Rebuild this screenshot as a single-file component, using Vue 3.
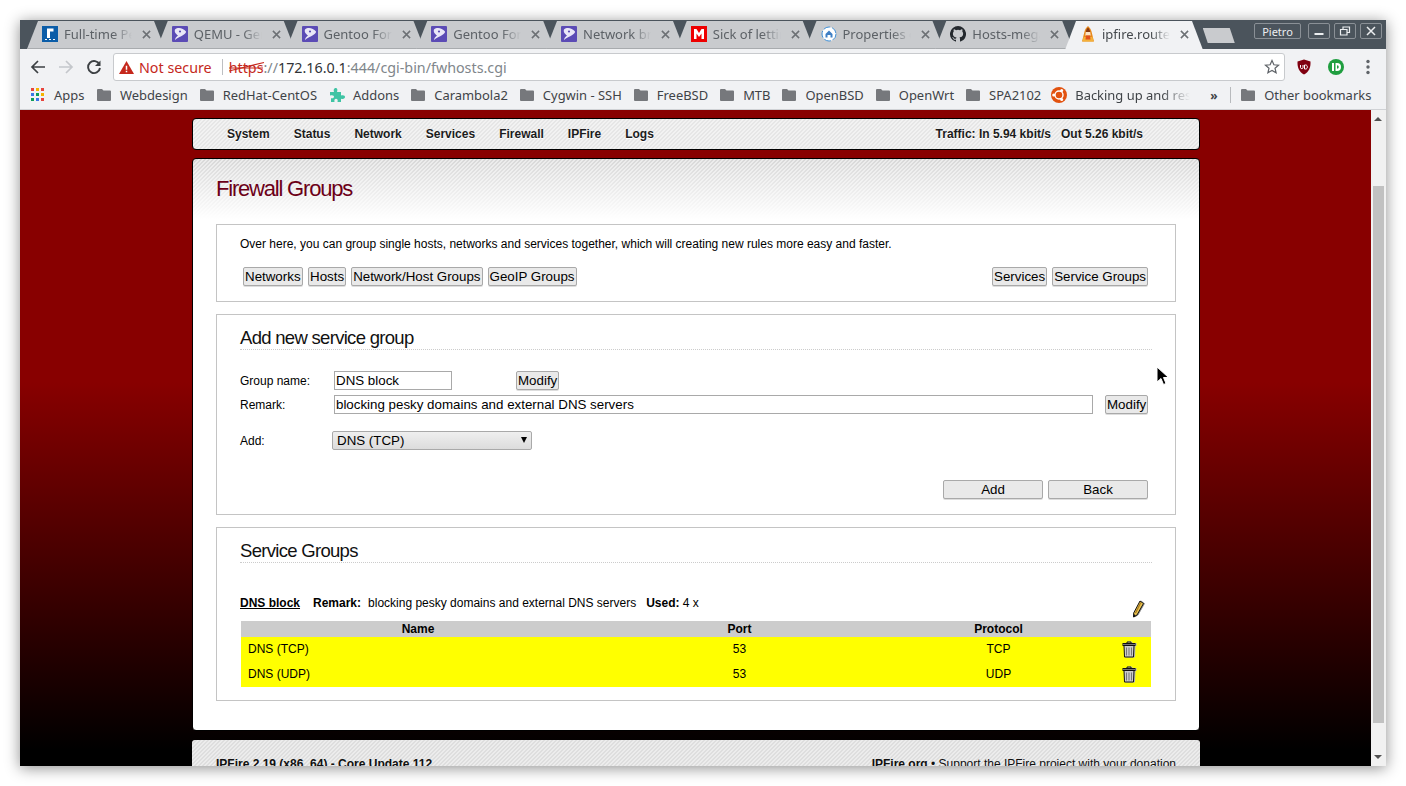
<script setup>
const tabs = [
  { title: 'Full-time Pentester', icon: 'rack' },
  { title: 'QEMU - Gentoo', icon: 'gentoo' },
  { title: 'Gentoo Forums', icon: 'gentoo' },
  { title: 'Gentoo Forums', icon: 'gentoo' },
  { title: 'Network bridge', icon: 'gentoo' },
  { title: 'Sick of letting', icon: 'mega' },
  { title: 'Properties of', icon: 'ring' },
  { title: 'Hosts-mega', icon: 'github' },
  { title: 'ipfire.router', icon: 'flame', active: true }
];

const bookmarks = [
  { label: 'Webdesign', icon: 'folder' },
  { label: 'RedHat-CentOS', icon: 'folder' },
  { label: 'Addons', icon: 'puzzle' },
  { label: 'Carambola2', icon: 'folder' },
  { label: 'Cygwin - SSH', icon: 'folder' },
  { label: 'FreeBSD', icon: 'folder' },
  { label: 'MTB', icon: 'folder' },
  { label: 'OpenBSD', icon: 'folder' },
  { label: 'OpenWrt', icon: 'folder' },
  { label: 'SPA2102', icon: 'folder' }
];

const appColors = ['#e8453c', '#f4b400', '#e8453c', '#3b78e7', '#0f9d58', '#f4b400', '#0f9d58', '#3b78e7', '#e8453c'];
const navItems = ['System', 'Status', 'Network', 'Services', 'Firewall', 'IPFire', 'Logs'];
const rows = [
  { name: 'DNS (TCP)', port: 53, protocol: 'TCP' },
  { name: 'DNS (UDP)', port: 53, protocol: 'UDP' }
];
</script>

<template>
  <div class="desktop">
    <div class="window">
      <div class="tabstrip">
        <div v-for="tab in tabs" :key="tab.title + tab.icon" class="tab" :class="{ active: tab.active }">
          <svg class="favicon" viewBox="0 0 16 16">
            <template v-if="tab.icon === 'rack'">
              <rect width="16" height="16" fill="#0b5da8" />
              <path d="M5 2.500h6.500v3H8v6.500H5z" fill="#fff" />
              <path d="M3 13.500h2M7 13.500h2M11 13.500h2" stroke="#fff" stroke-width="1" />
            </template>
            <template v-else-if="tab.icon === 'gentoo'">
              <rect width="16" height="16" rx="1" fill="#5b4bb5" />
              <path d="M3 3.500C6 1 11 2 14 5.500c.6 1.500-3 4-6.500 5.500-2 1-3.500 2-4.500 3 0-2 1.500-3 3-4.500C4 8 2 6 3 3.500z" fill="#e9e6f7" />
              <circle cx="8" cy="5.500" r="1.100" fill="#5b4bb5" />
            </template>
            <template v-else-if="tab.icon === 'mega'">
              <rect width="16" height="16" fill="#ee0000" />
              <rect x="1.500" y="1.500" width="13" height="13" fill="#ee0000" />
              <path d="M3 13V3h2.500L8 7l2.500-4H13v10h-2.500V7.500L8 11 5.500 7.500V13z" fill="#fff" />
            </template>
            <template v-else-if="tab.icon === 'ring'">
              <circle cx="8" cy="8" r="7" fill="#fff" stroke="#3f8fd6" stroke-width="1" stroke-dasharray="7 2" />
              <path d="M8 4.500l3.500 3.500v3.500h-2V9h-3v2.500h-2V8z" fill="#3f7fc4" />
            </template>
            <template v-else-if="tab.icon === 'github'">
              <path d="M8 0a8 8 0 0 0-2.530 15.590c.4.070.55-.170.55-.380v-1.490c-2.230.490-2.700-.940-2.700-.940-.360-.930-.890-1.170-.890-1.170-.730-.500.060-.490.060-.490.800.060 1.230.830 1.230.830.710 1.220 1.870.870 2.330.660.070-.520.280-.870.510-1.070-1.780-.200-3.640-.890-3.640-3.950 0-.870.310-1.590.820-2.150-.080-.200-.360-1.020.080-2.120 0 0 .670-.210 2.200.820a7.600 7.600 0 0 1 4 0c1.530-1.040 2.200-.820 2.200-.820.440 1.100.160 1.920.080 2.120.510.560.820 1.270.820 2.150 0 3.070-1.870 3.750-3.650 3.950.290.250.540.730.540 1.480v2.200c0 .210.150.460.550.380A8 8 0 0 0 8 0z" fill="#24292e" />
            </template>
            <template v-else>
              <path d="M8 0c1.700 1.500 3 3.200 3.500 5.500L14 15.500H2L4.500 5.500C5 3.200 6.300 1.500 8 0z" fill="#e8891c" />
              <path d="M8 1.500c1.200 1.200 2 2.600 2.200 4.500H5.800C6 4.100 6.800 2.700 8 1.500z" fill="#8a3a12" />
              <path d="M5.800 6h4.400l.5 3.500H5.300z" fill="#fbe3c4" />
              <path d="M3.500 11h9l1 4.500h-11z" fill="#f4b13a" />
              <path d="M6 9.500h4l.5 4h-5z" fill="#e2501c" />
            </template>
          </svg>
          <span class="tab-title">{{ tab.title }}</span>
          <svg class="tab-close" viewBox="0 0 10 10"><path d="M1 1l8 8M9 1l-8 8" /></svg>
        </div>
        <div class="new-tab"></div>
        <div class="window-controls">
          <div class="profile">Pietro</div>
          <div class="win-btn">
            <svg viewBox="0 0 12 12"><path d="M1.500 9h9" stroke-width="2" /></svg>
          </div>
          <div class="win-btn">
            <svg viewBox="0 0 12 12"><path d="M1.500 4.500h6.500v5.500H1.500zM4 4.500V2h6.500v5.500H8" stroke-width="1.200" /></svg>
          </div>
          <div class="win-btn">
            <svg viewBox="0 0 12 12"><path d="M2 2l8 8M10 2l-8 8" stroke-width="1.500" /></svg>
          </div>
        </div>
      </div>

      <div class="toolbar">
        <svg class="tool" viewBox="0 0 16 16"><path d="M15 8H2M8 2L2 8l6 6" fill="none" stroke="#3c4043" stroke-width="1.700" /></svg>
        <svg class="tool" viewBox="0 0 16 16"><path d="M1 8h13M8 2l6 6-6 6" fill="none" stroke="#c4c7cb" stroke-width="1.700" /></svg>
        <svg class="tool" viewBox="0 0 16 16"><path d="M13.500 5.500A6 6 0 1 0 14 9" fill="none" stroke="#3c4043" stroke-width="1.900" /><path d="M14.500 1.500v5.500H9z" fill="#3c4043" /></svg>
        <div class="omnibox">
          <svg class="warn" viewBox="0 0 16 16"><path d="M8 1l8 14H0z" fill="#c5281c" /><path d="M7.200 6h1.600v4.500H7.200zM7.200 11.500h1.600V13H7.200z" fill="#fff" /></svg>
          <span class="not-secure">Not secure</span>
          <span class="omni-sep"></span>
          <span class="url">
            <span class="scheme">https<svg viewBox="0 0 36 12"><path d="M0 10L35 1.500" stroke="#c5281c" stroke-width="1.200" /><path d="M0 7h34" stroke="#c5281c" stroke-width="1" /></svg></span><span class="dim">://</span><span class="host">172.16.0.1</span><span class="dim">:444/cgi-bin/fwhosts.cgi</span>
          </span>
          <svg class="star" viewBox="0 0 16 16"><path d="M8 1.500l1.900 4.300 4.600.4-3.500 3 1.100 4.600L8 11.400l-4.100 2.400L5 9.200l-3.500-3 4.600-.4z" fill="none" stroke="#5f6368" stroke-width="1.200" /></svg>
        </div>
        <div class="extensions">
          <svg viewBox="0 0 16 16" class="ext"><path d="M8 0.500l6.500 2c.3 6-1.500 10.500-6.500 13-5-2.500-6.800-7-6.500-13z" fill="#800010" /><path d="M4.500 6v2.500c0 1.500 2.500 1.500 2.500 0V6M8.500 6v4h1.200c2.200 0 2.200-4 0-4z" fill="none" stroke="#fff" stroke-width="1" /></svg>
          <svg viewBox="0 0 16 16" class="ext"><circle cx="8" cy="8" r="8" fill="#1f9e3f" /><rect x="4" y="4" width="2" height="8" fill="#fff" /><path d="M7.500 4H9a4 4 0 0 1 0 8H7.500z" fill="#fff" /><path d="M9 6.200v3.600a1.800 1.800 0 0 0 0-3.600z" fill="#1f9e3f" /></svg>
          <svg viewBox="0 0 16 16" class="ext"><circle cx="8" cy="2.500" r="1.700" fill="#5f6368" /><circle cx="8" cy="8" r="1.700" fill="#5f6368" /><circle cx="8" cy="13.500" r="1.700" fill="#5f6368" /></svg>
        </div>
      </div>

      <div class="bookmarks">
        <div class="bm apps">
          <div class="apps-grid"><i v-for="(c, i) in appColors" :key="i" :style="{ background: c }"></i></div>
          <span>Apps</span>
        </div>
        <div v-for="b in bookmarks" :key="b.label" class="bm">
          <svg v-if="b.icon === 'folder'" class="bm-icon" viewBox="0 0 14 14"><path d="M0 2a1 1 0 0 1 1-1h4l1.500 1.500H13a1 1 0 0 1 1 1V12a1 1 0 0 1-1 1H1a1 1 0 0 1-1-1z" fill="#76787c" /></svg>
          <svg v-else class="bm-icon puzzle" viewBox="0 0 16 16"><path d="M1 5h4c-.8-3 .5-4 1.700-4S9 2 8 5h4v3.500c2.800-.8 4 .3 4 1.500s-1.200 2.500-4 1.700V15H8.500c.7-2.500-.3-3.300-1.500-3.300S5 12.500 5.500 15H2v-3.800c2 .5 3-.3 3-1.400S4 7.800 1 8.500z" fill="#3fc4a4" /></svg>
          <span>{{ b.label }}</span>
        </div>
        <div class="bm backing">
          <svg class="bm-icon" viewBox="0 0 16 16"><circle cx="8" cy="8" r="8" fill="#e2520f" /><circle cx="8" cy="8" r="4" fill="none" stroke="#fff" stroke-width="1.400" /><circle cx="2.700" cy="8" r="1.500" fill="#fff" /><circle cx="10.700" cy="3.400" r="1.500" fill="#fff" /><circle cx="10.700" cy="12.600" r="1.500" fill="#fff" /></svg>
          <span class="fade">Backing up and restoring</span>
        </div>
        <div class="more">»</div>
        <div class="bm-sep"></div>
        <div class="bm">
          <svg class="bm-icon" viewBox="0 0 14 14"><path d="M0 2a1 1 0 0 1 1-1h4l1.500 1.500H13a1 1 0 0 1 1 1V12a1 1 0 0 1-1 1H1a1 1 0 0 1-1-1z" fill="#76787c" /></svg>
          <span>Other bookmarks</span>
        </div>
      </div>

      <div class="viewport">
        <div class="page">
          <div class="navbar">
            <a v-for="item in navItems" :key="item">{{ item }}</a>
            <span class="traffic">Traffic: In 5.94 kbit/s &nbsp; Out 5.26 kbit/s</span>
          </div>

          <div class="main">
            <h1>Firewall Groups</h1>

            <section class="box intro">
              <p>Over here, you can group single hosts, networks and services together, which will creating new rules more easy and faster.</p>
              <div class="group-nav">
                <button>Networks</button>
                <button>Hosts</button>
                <button>Network/Host Groups</button>
                <button>GeoIP Groups</button>
                <span class="spacer"></span>
                <button>Services</button>
                <button>Service Groups</button>
              </div>
            </section>

            <section class="box add">
              <h2>Add new service group</h2>
              <div class="form-row first">
                <label>Group name:</label>
                <input class="name-input" value="DNS block" />
                <button class="mod-name">Modify</button>
              </div>
              <div class="form-row">
                <label>Remark:</label>
                <input class="remark-input" value="blocking pesky domains and external DNS servers" />
                <button class="mod-remark">Modify</button>
              </div>
              <div class="form-row add-row">
                <label>Add:</label>
                <div class="select">DNS (TCP)<span class="caret"></span></div>
              </div>
              <div class="form-actions">
                <button class="wide">Add</button>
                <button class="wide">Back</button>
              </div>
            </section>

            <section class="box groups">
              <h2>Service Groups</h2>
              <div class="summary">
                <span class="group-name">DNS block</span>
                <b>Remark:</b>
                <span>blocking pesky domains and external DNS servers</span>
                <span class="used"><b>Used:</b> 4 x</span>
                <svg class="pencil" viewBox="0 0 12 18">
                  <path d="M8 1l3.500 2.500L5 15l-3.500 2 .2-4z" fill="#e9c24f" stroke="#111" stroke-width="1" />
                  <path d="M8.800 2.500L3.500 13" stroke="#a87a1c" stroke-width="1.200" />
                  <path d="M1.500 17l.2-3 2 1.300z" fill="#111" />
                </svg>
              </div>
              <table>
                <thead>
                  <tr><th class="c-name">Name</th><th class="c-port">Port</th><th class="c-proto">Protocol</th><th class="c-act"></th></tr>
                </thead>
                <tbody>
                  <tr v-for="row in rows" :key="row.name">
                    <td class="left"><span>{{ row.name }}</span></td>
                    <td><span>{{ row.port }}</span></td>
                    <td><span>{{ row.protocol }}</span></td>
                    <td class="act-cell">
                      <svg class="trash" viewBox="0 0 14 17">
                        <path d="M5 2.500V1h4v1.500" fill="none" stroke="#111" stroke-width="1" />
                        <rect x="1" y="2.500" width="12" height="2" fill="#777" stroke="#111" stroke-width="1" />
                        <path d="M2 4.500h10l-.5 11.500h-9z" fill="#ccc" stroke="#111" stroke-width="1" />
                        <path d="M4.500 6.500v8M7 6.500v8M9.500 6.500v8" stroke="#777" stroke-width="1" />
                      </svg>
                    </td>
                  </tr>
                </tbody>
              </table>
            </section>
          </div>

          <div class="footer">
            <b>IPFire 2.19 (x86_64) - Core Update 112</b>
            <span><b>IPFire.org</b> • Support the IPFire project with your donation</span>
          </div>
        </div>

        <div class="scrollbar">
          <div class="sb-up"></div>
          <div class="sb-thumb"></div>
          <div class="sb-down"></div>
        </div>

        <svg class="cursor" viewBox="0 0 13 20">
          <path d="M1 1v15l4-3.500 2.500 6 2.500-1-2.500-6H12.500z" fill="#000" stroke="#fff" stroke-width="1" />
        </svg>
      </div>
    </div>
  </div>
</template>

<style>
html, body { margin: 0; background: #fff; overflow: hidden; }
</style>

<style scoped>
.desktop {
  width: 1406px;
  height: 786px;
  padding: 20px;
  box-sizing: border-box;
  font-family: "Noto Sans", sans-serif;
}
.window {
  width: 1366px;
  height: 746px;
  display: flex;
  flex-direction: column;
  box-shadow: 0 2px 14px rgba(0, 0, 0, 0.45);
}

/* tabs */
.tabstrip {
  height: 29px;
  background: #4b545c;
  display: flex;
  padding-left: 7px;
  flex: none;
  position: relative;
}
.tab {
  width: 138px;
  flex: none;
  margin-right: -8.250px;
  height: 28px;
  margin-top: 1px;
  background: #c9cbce;
  clip-path: polygon(0 100%, 11px 0, 127px 0, 138px 100%);
  display: flex;
  align-items: center;
  padding: 0 0 1px 15px;
  box-sizing: border-box;
  font-size: 13px;
  color: #5c6166;
  border-bottom: 1px solid #a8abae;
}
.tab.active {
  background: #f1f2f4;
  color: #45494d;
  height: 29px;
  border-bottom: 0;
  padding-bottom: 3px;
}
.favicon { width: 16px; height: 16px; flex: none; }
.tab-title {
  width: 68px;
  margin-left: 6px;
  white-space: nowrap;
  overflow: hidden;
  -webkit-mask-image: linear-gradient(90deg, #000 72%, transparent 100%);
  mask-image: linear-gradient(90deg, #000 72%, transparent 100%);
}
.tab-close {
  width: 9px;
  height: 9px;
  margin-left: 10px;
  flex: none;
  stroke: #6d7175;
  stroke-width: 1.700;
  fill: none;
}
.new-tab {
  width: 32px;
  height: 15px;
  margin: 8px 0 0 8px;
  background: #c9cbce;
  clip-path: polygon(0 0, 27px 0, 32px 100%, 5px 100%);
}
.window-controls {
  position: absolute;
  right: 4px;
  top: 3px;
  display: flex;
  gap: 4px;
  color: #eceef0;
}
.profile {
  width: 47px;
  height: 16px;
  line-height: 15px;
  font-size: 11px;
  box-sizing: border-box;
  text-align: center;
  border: 1px solid #8a9096;
  border-radius: 2px;
  margin-right: 3px;
}
.win-btn {
  width: 22px;
  height: 16px;
  box-sizing: border-box;
  border: 1px solid #8a9096;
  border-radius: 2px;
  display: flex;
  align-items: center;
  justify-content: center;
}
.win-btn svg { width: 12px; height: 12px; fill: none; stroke: #eceef0; }

/* toolbar */
.toolbar {
  height: 34px;
  box-sizing: border-box;
  padding: 2px 0 0 10px;
  background: #f1f2f4;
  display: flex;
  align-items: center;
  flex: none;
}
.tool { width: 16px; height: 16px; margin-right: 12px; flex: none; }
.omnibox {
  width: 1172px;
  height: 28px;
  margin-left: -1px;
  box-sizing: border-box;
  background: #fff;
  border: 1px solid #c8cacd;
  border-radius: 3px;
  display: flex;
  align-items: center;
  padding-left: 5px;
  font-size: 14.300px;
  position: relative;
}
.warn { width: 15px; height: 15px; flex: none; }
.not-secure { color: #c5281c; margin-left: 5px; }
.omni-sep { width: 1px; height: 16px; background: #bdbfc2; margin: 0 6px 0 10px; }
.url { white-space: nowrap; }
.scheme { color: #c5281c; position: relative; display: inline-block; }
.scheme svg { position: absolute; left: 0; top: 3px; width: 36px; height: 12px; }
.dim { color: #80868b; }
.host { color: #303336; }
.star { width: 16px; height: 16px; position: absolute; right: 4px; top: 5px; }
.extensions {
  display: flex;
  align-items: center;
  gap: 16px;
  margin-left: 11px;
}
.ext { width: 16px; height: 16px; }

/* bookmarks */
.bookmarks {
  height: 27px;
  flex: none;
  background: #f1f2f4;
  border-bottom: 1px solid #d0d2d5;
  box-sizing: border-box;
  display: flex;
  align-items: center;
  padding: 0 0 2px 11px;
  font-size: 12.950px;
  color: #3f4347;
  white-space: nowrap;
}
.bm { display: flex; align-items: center; gap: 9px; margin-right: 12px; }
.apps { gap: 9px; margin-right: 12.500px; }
.apps-grid {
  width: 14px;
  height: 14px;
  display: grid;
  grid-template-columns: repeat(3, 3px);
  grid-auto-rows: 3px;
  gap: 2px;
}
.bm-icon { width: 14px; height: 14px; flex: none; }
.bm-icon.puzzle { width: 16px; height: 16px; margin-right: -1px; }
.backing { gap: 8px; margin: 0 20px 0 -2px; }
.backing .bm-icon { width: 16px; height: 16px; }
.fade {
  width: 115px;
  overflow: hidden;
  -webkit-mask-image: linear-gradient(90deg, #000 75%, transparent 100%);
  mask-image: linear-gradient(90deg, #000 75%, transparent 100%);
}
.more { font-weight: 700; font-size: 12px; width: 20px; }
.bm-sep { width: 1px; height: 16px; background: #b8babd; margin: 0 10px 0 0; }
.bm:last-child { margin-right: 0; }

/* page */
.viewport {
  flex: 1;
  min-height: 0;
  display: flex;
  overflow: hidden;
  position: relative;
}
.page {
  flex: 1;
  min-width: 0;
  overflow: hidden;
  padding: 8px 171px 0 172px;
  box-sizing: border-box;
  background: linear-gradient(180deg, #880000 0, #880000 272px, #000 640px);
  font-family: "Liberation Sans", Arial, sans-serif;
  color: #000;
  font-size: 12px;
}
.navbar {
  height: 32px;
  box-sizing: border-box;
  border: 1px solid #000;
  border-radius: 4px;
  background: repeating-linear-gradient(135deg, #e6e6e6 0 1.414px, #f2f2f2 1.414px 2.828px);
  display: flex;
  align-items: center;
  padding: 0 56px 0 34px;
  gap: 24px;
  font-weight: 700;
  color: #1c1c1c;
  text-shadow: 0 1px 0 #fff;
}
.traffic { margin-left: auto; }
.main {
  margin-top: 8px;
  height: 573px;
  box-sizing: border-box;
  padding: 0 23px;
  border-radius: 4px;
  border: 1px solid #000;
  background:
    linear-gradient(180deg, rgba(255, 255, 255, 0) 0, #fff 60px),
    repeating-linear-gradient(135deg, #d8d8d8 0 1.414px, #ebebeb 1.414px 2.828px);
}
h1 {
  margin: 0;
  padding-top: 17px;
  height: 65px;
  box-sizing: border-box;
  font-size: 22px;
  line-height: 25px;
  font-weight: 400;
  letter-spacing: -1.200px;
  color: #6c0018;
}
.box {
  border: 1px solid #c4c4c4;
  background: #fff;
  box-sizing: border-box;
  padding: 0 24px 0 23px;
  margin-bottom: 12px;
}
.intro { height: 78px; }
.intro p { margin: 13px 0 0; line-height: 13px; }
.group-nav { display: flex; gap: 5px; margin: 16px 3px 0 3px; }
.group-nav button:first-child { margin-right: 0.500px; }
.spacer { flex: 1; }
button {
  height: 19px;
  padding: 0 1px;
  box-sizing: border-box;
  font: 13.330px "Liberation Sans", Arial, sans-serif;
  color: #000;
  background: #e9e9e9;
  border: 1px solid #a9a9a9;
  border-radius: 2px;
  box-shadow: 0 1px 0 #ddd;
}
.add { height: 201px; }
h2 {
  margin: 0;
  padding-top: 12px;
  height: 35px;
  box-sizing: border-box;
  font-size: 18.500px;
  line-height: 22px;
  font-weight: 400;
  letter-spacing: -0.700px;
  color: #111;
  border-bottom: 1px dotted #ccc;
  margin-right: -1px;
}
.form-row { display: flex; align-items: center; height: 19px; margin-top: 5px; }
.form-row.first { margin-top: 21px; }
.form-row label { width: 94px; flex: none; }
input {
  height: 19px;
  box-sizing: border-box;
  padding: 0 1px;
  border: 1px solid #a9a9a9;
  font: 13.330px "Liberation Sans", Arial, sans-serif;
  color: #000;
  background: #fff;
  outline: none;
}
.name-input { width: 118px; }
.mod-name { margin-left: 64px; }
.remark-input { width: 759px; }
.mod-remark { margin-left: 12px; }
.add-row { margin-top: 17px; }
.add-row label { width: 92px; }
.select {
  width: 200px;
  height: 19px;
  box-sizing: border-box;
  padding-left: 4px;
  line-height: 17px;
  border: 1px solid #a9a9a9;
  border-radius: 2px;
  background: linear-gradient(180deg, #efefef, #dcdcdc);
  font-size: 13.330px;
  position: relative;
}
.caret {
  position: absolute;
  right: 4px;
  top: 5px;
  width: 0;
  height: 0;
  border: 3.500px solid transparent;
  border-top: 6px solid #000;
  border-bottom: 0;
}
.form-actions {
  display: flex;
  justify-content: flex-end;
  gap: 5px;
  margin-top: 30px;
  margin-right: 3px;
}
.wide { width: 100px; }
.groups { height: 174px; }
.summary {
  display: flex;
  align-items: center;
  margin-top: 32px;
  height: 15px;
  white-space: nowrap;
  position: relative;
}
.group-name { font-weight: 700; text-decoration: underline; margin-right: 13px; }
.summary b + span { margin-left: 7px; }
.used { margin-left: 10px; }
.pencil {
  position: absolute;
  left: 892px;
  top: 5px;
  width: 12px;
  height: 18px;
  filter: drop-shadow(1px 0 0 #999);
}
table {
  width: 910px;
  margin: 11px 0 0 1px;
  border-collapse: collapse;
  table-layout: fixed;
  font-size: 12px;
}
th {
  height: 16px;
  padding: 0;
  background: #ccc;
  font-weight: 700;
}
td {
  height: 25px;
  padding: 0 0 2px;
  box-sizing: border-box;
  background: #ff0;
  text-align: center;
}
td.left { text-align: left; padding-left: 7px; }
.c-name { width: 354px; }
.c-port { width: 289px; }
.c-proto { width: 229px; }
.act-cell { text-align: left; padding: 0; }
.trash {
  width: 14px;
  height: 17px;
  display: block;
  margin: 0 0 0 9px;
  filter: drop-shadow(1px 0 0 #b4b4c4);
}
.footer {
  margin-top: 9px;
  height: 40px;
  border-radius: 3px 3px 0 0;
  background: repeating-linear-gradient(135deg, #dedede 0 1.414px, #ececec 1.414px 2.828px);
  display: flex;
  justify-content: space-between;
  padding: 17px 24px 0;
  box-sizing: border-box;
  color: #111;
  line-height: 14px;
}

/* scrollbar */
.scrollbar {
  width: 15px;
  flex: none;
  background: #f1f1f1;
  position: relative;
  border-left: 0;
}
.sb-up, .sb-down {
  position: absolute;
  left: 3px;
  width: 0;
  height: 0;
  border: 4px solid transparent;
}
.sb-up { top: 3px; border-bottom: 4px solid #505050; }
.sb-down { bottom: 3px; border-top: 4px solid #505050; }
.sb-thumb {
  position: absolute;
  left: 2px;
  top: 76px;
  width: 11px;
  height: 537px;
  background: #c1c1c1;
}
.cursor {
  position: absolute;
  left: 1136px;
  top: 256px;
  width: 13px;
  height: 20px;
}
</style>
